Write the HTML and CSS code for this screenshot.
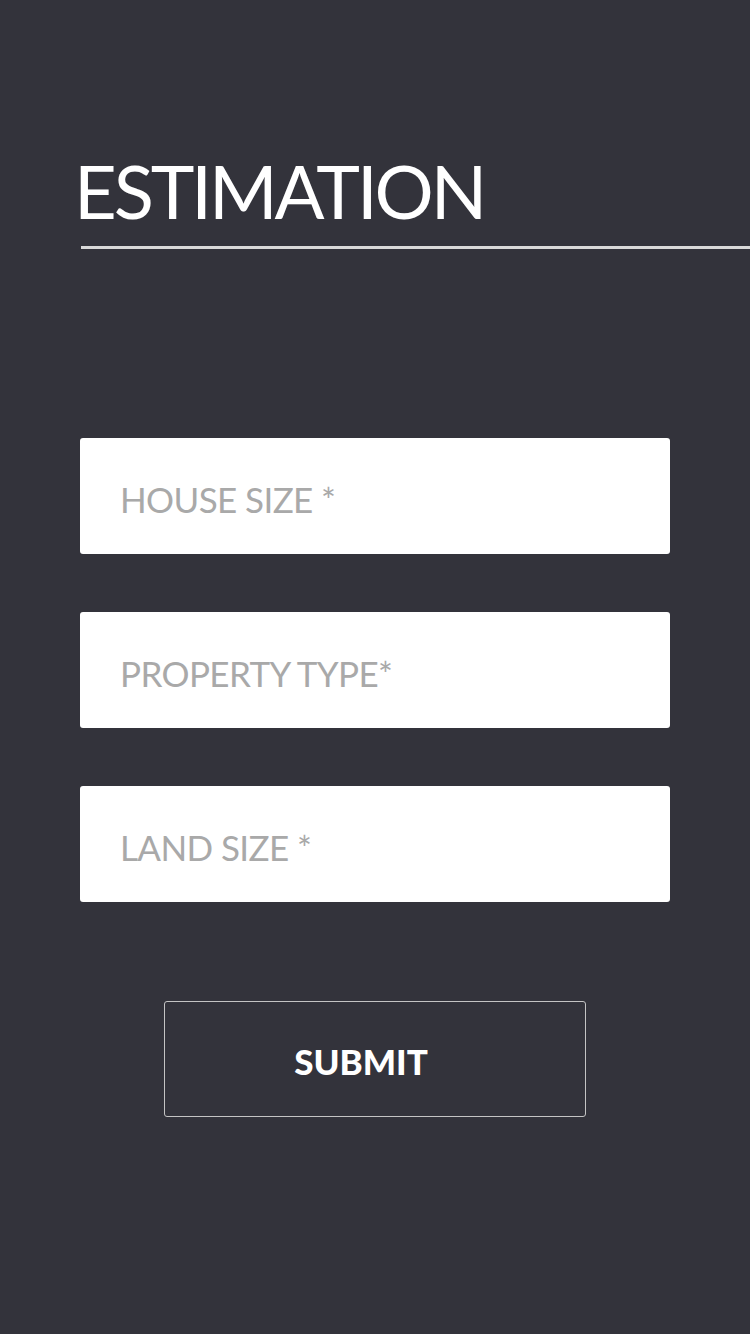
FILE: index.html
```html
<!DOCTYPE html>
<html>
<head>
<meta charset="utf-8">
<link rel="stylesheet" href="styles.css">
</head>
<body>
<div class="page">
  <header class="head">
    <h1 class="title">ESTIMATION</h1>
    <div class="rule"></div>
  </header>
  <form class="form">
    <div class="field"><span class="ph">HOUSE SIZE *</span></div>
    <div class="field"><span class="ph">PROPERTY TYPE*</span></div>
    <div class="field"><span class="ph">LAND SIZE *</span></div>
    <div class="actions"><button type="button" class="submit">SUBMIT</button></div>
  </form>
</div>
</body>
</html>
```
FILE: styles.css
```css
html, body {
  margin: 0;
  padding: 0;
  background: #33333b;
}
.page {
  width: 750px;
  height: 1334px;
  background: #33333b;
  font-family: Lato, "Noto Sans", sans-serif;
  overflow: hidden;
}
.head {
  padding-top: 152px;
  padding-left: 74px;
}
.title {
  margin: 0;
  font-weight: 400;
  font-size: 74px;
  line-height: 78px;
  color: #ffffff;
  letter-spacing: -3.1px;
}
.rule {
  margin-top: 16px;
  margin-left: 7px;
  height: 3px;
  background: #d9d9d9;
}
.form {
  margin: 189px 0 0 80px;
  width: 590px;
  display: flex;
  flex-direction: column;
  gap: 58px;
}
.field {
  height: 116px;
  background: #ffffff;
  border-radius: 3px;
  display: flex;
  align-items: center;
  padding-left: 40px;
  padding-top: 5px;
  box-sizing: border-box;
}
.ph {
  color: #a9a9a9;
  font-size: 35px;
  letter-spacing: -0.6px;
}
.actions {
  display: flex;
  justify-content: center;
  margin-top: 41px;
}
.submit {
  width: 422px;
  height: 116px;
  background: transparent;
  border: 1px solid #c4c4c4;
  border-radius: 3px;
  color: #ffffff;
  font-family: Lato, "Noto Sans", sans-serif;
  font-weight: 900;
  font-size: 35px;
  letter-spacing: 0;
  padding: 4px 28px 0 0;
}
```
